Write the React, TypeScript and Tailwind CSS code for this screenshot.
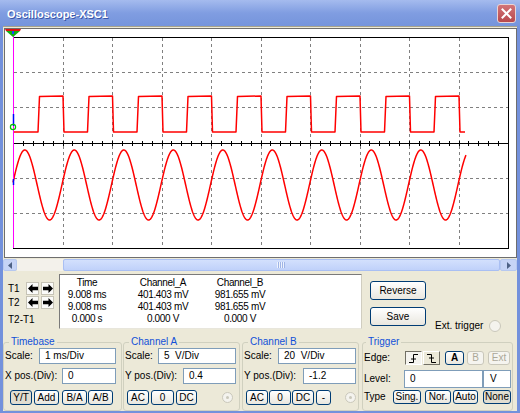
import React from "react";

const FONT = "font-['Liberation_Sans',Arial,sans-serif]";

function Btn({
  className = "",
  children,
  pressed = false,
  disabled = false,
  bold = false,
}: {
  className?: string;
  children: React.ReactNode;
  pressed?: boolean;
  disabled?: boolean;
  bold?: boolean;
}) {
  const look = disabled
    ? "border-[#c9c7ba] bg-[#f5f4ef] text-[#aca899]"
    : pressed
    ? "border-[#003c74] bg-[#e0ddd1] text-black"
    : "border-[#003c74] bg-linear-to-b from-white to-[#e9e7df] text-black";
  return (
    <div
      className={`flex shrink-0 items-center justify-center rounded-[3px] border text-[10px] leading-none ${
        bold ? "font-bold" : ""
      } ${look} ${className}`}
    >
      {children}
    </div>
  );
}

function Field({ className = "", children }: { className?: string; children: React.ReactNode }) {
  return (
    <div
      className={`flex shrink-0 items-center border border-[#7f9db9] bg-white pl-[5px] text-[10px] leading-none text-black ${className}`}
    >
      {children}
    </div>
  );
}

function Radio() {
  return (
    <div className="flex h-[11px] w-[11px] shrink-0 items-center justify-center rounded-full border border-[#cac8bb] bg-[#f4f3ee]">
      <div className="h-[3px] w-[3px] rounded-full bg-[#cac8bb]" />
    </div>
  );
}

function Arrow({ dir }: { dir: "l" | "r" }) {
  return (
    <div className="flex h-[13px] w-[13px] items-center justify-center border border-[#c6c3b6] bg-[#fbfbf9]">
      <svg width="10" height="9" viewBox="0 0 10 9">
        {dir === "l" ? (
          <polygon points="0,4.5 4.5,0 4.5,2.8 10,2.8 10,6.2 4.5,6.2 4.5,9" fill="#000" />
        ) : (
          <polygon points="10,4.5 5.5,0 5.5,2.8 0,2.8 0,6.2 5.5,6.2 5.5,9" fill="#000" />
        )}
      </svg>
    </div>
  );
}

const DX = 49.5;
const DY = 211 / 6;

function squarePath() {
  let d = "M8 103";
  for (let k = 0; k < 9; k++) {
    const r = 33 + DX * k;
    const f = 58 + DX * k;
    d += ` L${r} 103 L${r + 1.5} 67.5 L${f} 67 L${f + 1} 103`;
  }
  d += " L460 103";
  return d;
}

function sinePath() {
  const pts: string[] = [];
  for (let x = 8; x <= 461; x += 0.5) {
    const y = 156 - 35 * Math.cos((2 * Math.PI * (x - 19.8)) / 49.5);
    pts.push(`${x} ${y.toFixed(2)}`);
  }
  return "M" + pts.join(" L");
}

function Screen() {
  const vx = Array.from({ length: 9 }, (_, i) => Math.round(8 + DX * (i + 1)) + 0.5);
  const hy = [1, 2, 4, 5].map((k) => Math.round(8 + DY * k) + 0.5);
  const ticks = Array.from({ length: 51 }, (_, i) => Math.round(8 + 9.9 * i) + 0.5);
  return (
    <div className="ml-[1px] mt-[1px] h-[230px] shrink-0 border border-[#6e6e6e] bg-white">
      <svg width="511" height="228" className="block">
        <g stroke="#808080" strokeWidth="1" strokeDasharray="3 3" shapeRendering="crispEdges">
          {vx.map((x) => (
            <line key={"v" + x} x1={x} y1={9} x2={x} y2={219} />
          ))}
          {hy.map((y) => (
            <line key={"h" + y} x1={9} y1={y} x2={503} y2={y} />
          ))}
        </g>
        <g stroke="#000" strokeWidth="1" shapeRendering="crispEdges">
          <line x1={8} y1={114.5} x2={503} y2={114.5} />
          {ticks.map((x) => (
            <line key={"t" + x} x1={x} y1={112} x2={x} y2={117} />
          ))}
          <path d="M8 8.5 H503.5 V219.5 H8" fill="none" />
        </g>
        <path d={squarePath()} fill="none" stroke="#ff0000" strokeWidth="1.5" strokeLinejoin="round" />
        <path d={sinePath()} fill="none" stroke="#ff0000" strokeWidth="1.5" strokeLinejoin="round" />
        <line x1={8.5} y1={3} x2={8.5} y2={219} stroke="#ff00ff" strokeWidth="1" shapeRendering="crispEdges" />
        <line x1={8.5} y1={85} x2={8.5} y2={97} stroke="#0000ff" strokeWidth="1.5" />
        <line x1={8.5} y1={150} x2={8.5} y2={156} stroke="#0000ff" strokeWidth="1.5" />
        <circle cx={8} cy={98} r={2.6} fill="none" stroke="#00c000" strokeWidth="1.2" />
        <polygon points="0,0 16,0 15,2 1,2" fill="#e01010" />
        <polygon points="1,2 15,2 8,8" fill="#10b010" />
        <rect x={7} y={2} width={2} height={3} fill="#2040ff" />
      </svg>
    </div>
  );
}

function Scrollbar() {
  return (
    <div className="mt-[1px] flex h-[12px] shrink-0">
      <div className="flex w-[14px] items-center justify-center rounded-[2px] border border-[#b6c8f0] bg-[#c6d4f6]">
        <svg width="4" height="7" viewBox="0 0 4 7">
          <polygon points="4,0 0,3.5 4,7" fill="#4d6185" />
        </svg>
      </div>
      <div className="w-[46px] bg-[#f3f1eb]" />
      <div className="flex w-[437px] items-center justify-center rounded-[2px] border border-[#a9bff3] bg-linear-to-b from-[#d3e0fd] to-[#c0d1fa]">
        <svg width="9" height="6" viewBox="0 0 9 6">
          <g stroke="#eef3fd" strokeWidth="1">
            <line x1="0.5" y1="0" x2="0.5" y2="6" />
            <line x1="2.5" y1="0" x2="2.5" y2="6" />
            <line x1="4.5" y1="0" x2="4.5" y2="6" />
            <line x1="6.5" y1="0" x2="6.5" y2="6" />
          </g>
          <g stroke="#9fb4e6" strokeWidth="1">
            <line x1="1.5" y1="0" x2="1.5" y2="6" />
            <line x1="3.5" y1="0" x2="3.5" y2="6" />
            <line x1="5.5" y1="0" x2="5.5" y2="6" />
            <line x1="7.5" y1="0" x2="7.5" y2="6" />
          </g>
        </svg>
      </div>
      <div className="flex flex-1 items-center justify-center rounded-[2px] border border-[#b6c8f0] bg-[#c6d4f6]">
        <svg width="4" height="7" viewBox="0 0 4 7">
          <polygon points="0,0 4,3.5 0,7" fill="#4d6185" />
        </svg>
      </div>
    </div>
  );
}

function CursorRow() {
  const rows = [
    ["Time", "Channel_A", "Channel_B"],
    ["9.008 ms", "401.403 mV", "981.655 mV"],
    ["9.008 ms", "401.403 mV", "981.655 mV"],
    ["0.000 s", "0.000 V", "0.000 V"],
  ];
  return (
    <div className="mt-[2px] flex h-[58px] shrink-0">
      <div className="flex w-[56px] flex-col pl-[5px] pt-[9px] text-[10px] leading-none text-black">
        <div className="flex h-[13px] items-center">
          <span className="w-[18px]">T1</span>
          <Arrow dir="l" />
          <div className="ml-[2px]">
            <Arrow dir="r" />
          </div>
        </div>
        <div className="mt-[1px] flex h-[13px] items-center">
          <span className="w-[18px]">T2</span>
          <Arrow dir="l" />
          <div className="ml-[2px]">
            <Arrow dir="r" />
          </div>
        </div>
        <div className="mt-[5px] flex h-[12px] items-center">T2-T1</div>
      </div>
      <div className="mt-[1px] h-[55px] w-[303px] border-t border-l border-b border-r border-t-[#7a7a7a] border-l-[#7a7a7a] border-b-[#e8e6dc] border-r-[#d0cdc0] bg-white pt-[2px]">
        <div className="grid grid-cols-[54px_98px_56px] text-[10px] leading-[12px] tracking-[-0.35px] text-black">
          {rows.map((r, i) => (
            <React.Fragment key={i}>
              <div className="text-center">{r[0]}</div>
              <div className="text-center">{r[1]}</div>
              <div className="text-center">{r[2]}</div>
            </React.Fragment>
          ))}
        </div>
      </div>
      <div className="ml-[8px] flex w-[56px] flex-col pt-[8px]">
        <Btn className="h-[19px] w-[56px]">Reverse</Btn>
        <Btn className="mt-[7px] h-[19px] w-[56px]">Save</Btn>
      </div>
      <div className="ml-[9px] mt-[47px] flex h-[12px] items-center text-[10px] leading-none text-black">
        <span>Ext. trigger</span>
        <div className="ml-[6px] h-[12px] w-[12px] rounded-full border border-[#cac8bb] bg-[#f4f3ee]" />
      </div>
    </div>
  );
}

function Legend({ children, className = "" }: { children: React.ReactNode; className?: string }) {
  return (
    <legend className={`px-[2px] text-[10px] leading-[12px] text-[#1150d8] ${className}`}>{children}</legend>
  );
}

function Controls() {
  return (
    <div className="mt-[5px] flex h-[75px] shrink-0 text-[10px] leading-none text-black">
      {/* Timebase */}
      <fieldset className="h-[75px] w-[119px] shrink-0 rounded-[3px] border border-[#d0d0bf]">
        <Legend className="ml-[5px]">Timebase</Legend>
        <div className="flex h-[16px] items-center pl-[1px] pr-[5px]">
          <span>Scale:</span>
          <Field className="ml-auto h-[16px] w-[77px]">1 ms/Div</Field>
        </div>
        <div className="mt-[4px] flex h-[16px] items-center pl-[1px] pr-[5px]">
          <span>X pos.(Div):</span>
          <Field className="ml-auto h-[16px] w-[54px]">0</Field>
        </div>
        <div className="mt-[6px] flex h-[15px] items-center pl-[6px]">
          <Btn pressed className="h-[15px] w-[22px]">Y/T</Btn>
          <Btn className="ml-[2px] h-[15px] w-[25px]">Add</Btn>
          <Btn className="ml-[3px] h-[15px] w-[25px]">B/A</Btn>
          <Btn className="ml-[1px] h-[15px] w-[25px]">A/B</Btn>
        </div>
      </fieldset>

      {/* Channel A */}
      <fieldset className="ml-[1px] h-[75px] w-[117px] shrink-0 rounded-[3px] border border-[#d0d0bf]">
        <Legend className="ml-[5px]">Channel A</Legend>
        <div className="flex h-[16px] items-center pl-[1px] pr-[3px]">
          <span>Scale:</span>
          <Field className="ml-auto h-[16px] w-[78px]">5&nbsp;&nbsp;V/Div</Field>
        </div>
        <div className="mt-[4px] flex h-[16px] items-center pl-[1px] pr-[3px]">
          <span>Y pos.(Div):</span>
          <Field className="ml-auto h-[16px] w-[53px]">0.4</Field>
        </div>
        <div className="mt-[6px] flex h-[15px] items-center pl-[3px]">
          <Btn className="h-[15px] w-[22px]">AC</Btn>
          <Btn className="ml-[2px] h-[15px] w-[23px]">0</Btn>
          <Btn className="ml-[2px] h-[15px] w-[21px]">DC</Btn>
          <div className="ml-[25px]">
            <Radio />
          </div>
        </div>
      </fieldset>

      {/* Channel B */}
      <fieldset className="ml-[2px] h-[75px] w-[117px] shrink-0 rounded-[3px] border border-[#d0d0bf]">
        <Legend className="ml-[5px]">Channel B</Legend>
        <div className="flex h-[16px] items-center pl-[1px] pr-[2px]">
          <span>Scale:</span>
          <Field className="ml-auto h-[16px] w-[78px]">20&nbsp;&nbsp;V/Div</Field>
        </div>
        <div className="mt-[4px] flex h-[16px] items-center pl-[1px] pr-[2px]">
          <span>Y pos.(Div):</span>
          <Field className="ml-auto h-[16px] w-[53px]">-1.2</Field>
        </div>
        <div className="mt-[6px] flex h-[15px] items-center pl-[3px]">
          <Btn className="h-[15px] w-[22px]">AC</Btn>
          <Btn className="ml-[1px] h-[15px] w-[22px]">0</Btn>
          <Btn className="ml-[1px] h-[15px] w-[22px]">DC</Btn>
          <Btn className="ml-[2px] h-[15px] w-[15px]">-</Btn>
          <div className="ml-[14px]">
            <Radio />
          </div>
        </div>
      </fieldset>

      {/* Trigger */}
      <fieldset className="ml-[3px] h-[75px] w-[151px] shrink-0 rounded-[3px] border border-[#d0d0bf]">
        <Legend className="ml-[3px]">Trigger</Legend>
        <div className="mt-[3px] flex h-[14px] items-center pl-[1px]">
          <span className="w-[41px]">Edge:</span>
          <div className="flex h-[14px] w-[17px] items-center justify-center border border-t-[#716f64] border-l-[#716f64] border-b-white border-r-white bg-[#f4f3ee]">
            <svg width="11" height="9" viewBox="0 0 11 9">
              <path d="M1 8.5 H5.5 V0.5 H10" fill="none" stroke="#000" strokeWidth="1" />
              <path d="M3 5 H8" fill="none" stroke="#000" strokeWidth="1" />
            </svg>
          </div>
          <div className="ml-[1px] flex h-[14px] w-[17px] items-center justify-center border border-t-white border-l-white border-b-[#716f64] border-r-[#716f64] bg-[#ece9d8]">
            <svg width="11" height="9" viewBox="0 0 11 9">
              <path d="M1 0.5 H5.5 V8.5 H10" fill="none" stroke="#000" strokeWidth="1" />
              <path d="M3 4 H8" fill="none" stroke="#000" strokeWidth="1" />
            </svg>
          </div>
          <Btn bold className="ml-[5px] h-[14px] w-[19px]">A</Btn>
          <Btn disabled className="ml-[3px] h-[14px] w-[17px]">B</Btn>
          <Btn disabled className="ml-[4px] h-[14px] w-[22px]">Ext</Btn>
        </div>
        <div className="mt-[5px] flex h-[18px] items-center pl-[1px]">
          <span className="w-[40px]">Level:</span>
          <Field className="h-[18px] w-[79px]">0</Field>
          <Field className="h-[18px] w-[28px] pl-[6px]">V</Field>
        </div>
        <div className="mt-[2px] flex h-[14px] items-center pl-[1px]">
          <span className="w-[29px]">Type</span>
          <Btn className="h-[14px] w-[28px]">Sing.</Btn>
          <Btn className="ml-[4px] h-[14px] w-[26px]">Nor.</Btn>
          <Btn className="ml-[2px] h-[14px] w-[25px]">Auto</Btn>
          <Btn pressed className="ml-[5px] h-[14px] w-[28px]">None</Btn>
        </div>
      </fieldset>
    </div>
  );
}

export default function App() {
  return (
    <div className={`flex h-[413px] w-[520px] flex-col overflow-hidden bg-[#7391dc] ${FONT}`}>
      <div className="flex h-[26px] shrink-0 items-center bg-linear-to-b from-[#a5bbee] via-[#809de1] to-[#7594dc]">
        <span className="pl-[7px] pt-[2px] text-[11px] font-bold leading-none text-white [text-shadow:1px_1px_0_#3a56a8]">
          Oscilloscope-XSC1
        </span>
        <div className="ml-auto mr-[4px] flex h-[19px] w-[19px] items-center justify-center rounded-[3px] border border-[#e9d4d4] bg-linear-to-b from-[#d27478] to-[#b8484c]">
          <svg width="11" height="11" viewBox="0 0 11 11">
            <path d="M1.5 1.5 L9.5 9.5 M9.5 1.5 L1.5 9.5" stroke="#fff" strokeWidth="2" strokeLinecap="square" />
          </svg>
        </div>
      </div>
      <div className="mx-[3px] mb-[3px] flex flex-1 flex-col border-t border-[#a8a38c] bg-[#ece9d8]">
        <Screen />
        <Scrollbar />
        <CursorRow />
        <Controls />
      </div>
    </div>
  );
}
